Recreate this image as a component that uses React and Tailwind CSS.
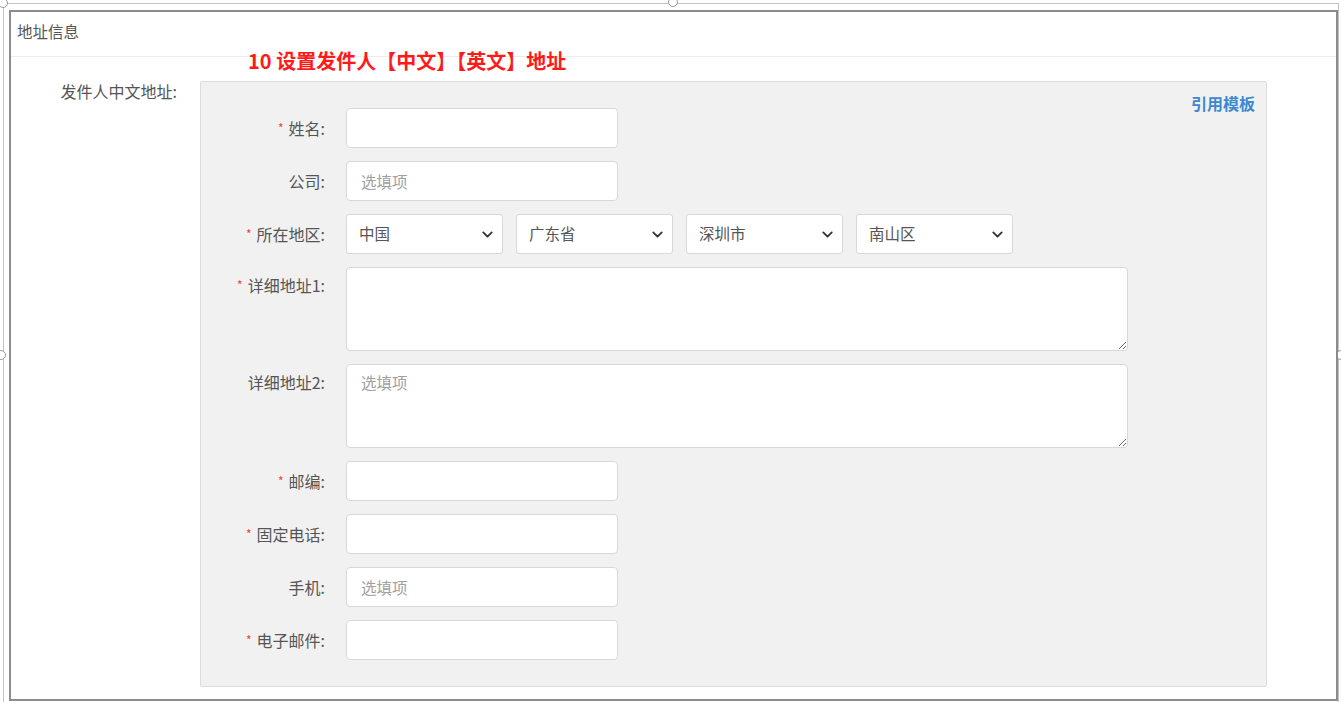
import { ChevronDown } from 'lucide-react'

const font = { fontFamily: '"Noto Sans CJK SC", "Liberation Sans", sans-serif' }

function Label({ required, children, top }) {
  return (
    <div className={`w-[124px] shrink-0 text-right text-[16px] text-[#555] ${top ? 'pt-[6px] leading-[24px]' : 'h-[40px] leading-[40px]'}`}>
      {required && <span className="text-[#f04040] text-[12px] leading-none mr-[5px] relative top-[-2px]">*</span>}
      {children}
    </div>
  )
}

function Input({ placeholder }) {
  return (
    <input
      placeholder={placeholder}
      className="ml-[21px] w-[272px] h-[40px] bg-white border border-[#d8d8d8] rounded-[4px] px-[14px] text-[15.5px] text-[#555] placeholder:text-[#a0a0a0] outline-none"
      style={font}
    />
  )
}

function Select({ value }) {
  return (
    <div className="w-[157px] h-[40px] bg-white border border-[#d8d8d8] rounded-[3px] flex items-center justify-between pl-[12px] pr-[6px] text-[15.5px] text-[#555]">
      <span>{value}</span>
      <ChevronDown size={17} strokeWidth={2.6} className="text-[#333]" />
    </div>
  )
}

function Area({ placeholder }) {
  return (
    <textarea
      placeholder={placeholder}
      className="ml-[21px] w-[782px] h-[84px] bg-white border border-[#d8d8d8] rounded-[4px] px-[14px] py-[6px] text-[15.5px] text-[#555] placeholder:text-[#a0a0a0] outline-none resize"
      style={font}
    />
  )
}

function Row({ label, required, top, children }) {
  return (
    <div className="flex items-start">
      <Label required={required} top={top}>{label}</Label>
      {children}
    </div>
  )
}

function Handle({ className }) {
  return <div className={`absolute w-[10px] h-[10px] rounded-full bg-white border border-[#9a9a9a] ${className}`} />
}

export default function App() {
  return (
    <div className="relative w-[1341px] h-[702px] bg-white overflow-hidden" style={font}>
      {/* selection frame */}
      <div className="absolute left-[3px] top-[3px] w-[1336px] h-[720px] border border-[#c4c4c4]" />
      <Handle className="left-[-2px] top-[-2px]" />
      <Handle className="left-[668px] top-[-3px]" />
      <Handle className="left-[-4px] top-[350px]" />
      <Handle className="left-[1336px] top-[350px]" />

      <div className="absolute left-[9px] top-[10px] w-[1329px] h-[691px] border-2 border-[#8c8c8c] bg-white">
        <div className="h-[45px] border-b border-[#ececec] pl-[6px] pt-[8px] leading-[22px] text-[15.5px] text-[#555]">
          地址信息
        </div>

        <div className="absolute left-[237px] top-[35px] text-[20px] font-bold text-[#ff1a1a] leading-[28px]">
          10 设置发件人【中文】【英文】地址
        </div>

        <div className="flex pt-[24px]">
          <div className="w-[189px] shrink-0 text-right pr-[23px] text-[16px] text-[#555] leading-[20px]">
            发件人中文地址:
          </div>
          <div className="relative w-[1067px] bg-[#f1f1f1] border border-[#dcdcdc] rounded-[2px] pt-[26px] pb-[26px] flex flex-col gap-[13px]">
            <div className="absolute right-[11px] top-[9px] text-[16px] font-bold text-[#3d88cf]">引用模板</div>
            <Row label="姓名:" required><Input /></Row>
            <Row label="公司:"><Input placeholder="选填项" /></Row>
            <Row label="所在地区:" required>
              <div className="ml-[21px] flex gap-[13px]">
                <Select value="中国" />
                <Select value="广东省" />
                <Select value="深圳市" />
                <Select value="南山区" />
              </div>
            </Row>
            <Row label="详细地址1:" required top><Area /></Row>
            <Row label="详细地址2:" top><Area placeholder="选填项" /></Row>
            <Row label="邮编:" required><Input /></Row>
            <Row label="固定电话:" required><Input /></Row>
            <Row label="手机:"><Input placeholder="选填项" /></Row>
            <Row label="电子邮件:" required><Input /></Row>
          </div>
        </div>
      </div>
    </div>
  )
}
